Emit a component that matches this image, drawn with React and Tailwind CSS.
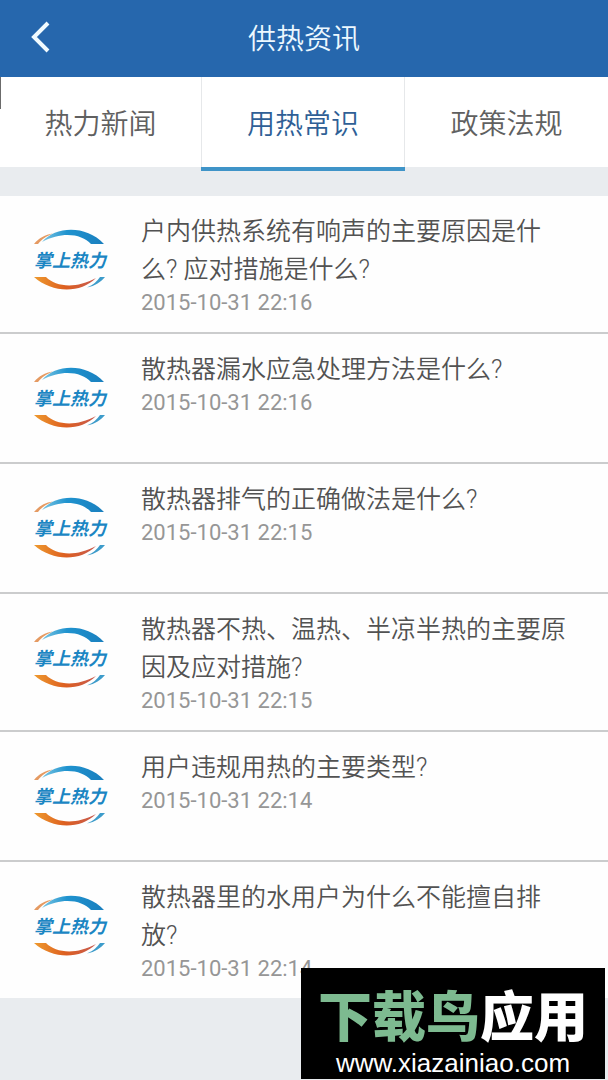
import React from "react";

const tabs = [
  { label: "热力新闻", active: false },
  { label: "用热常识", active: true },
  { label: "政策法规", active: false },
];

const articles = [
  { title: "户内供热系统有响声的主要原因是什么? 应对措施是什么?", time: "2015-10-31 22:16" },
  { title: "散热器漏水应急处理方法是什么?", time: "2015-10-31 22:16" },
  { title: "散热器排气的正确做法是什么?", time: "2015-10-31 22:15" },
  { title: "散热器不热、温热、半凉半热的主要原因及应对措施?", time: "2015-10-31 22:15" },
  { title: "用户违规用热的主要类型?", time: "2015-10-31 22:14" },
  { title: "散热器里的水用户为什么不能擅自排放?", time: "2015-10-31 22:14" },
];

function Logo({ id }) {
  return (
    <svg viewBox="0 0 80 80" className="size-20 shrink-0" role="img" aria-label="掌上热力">
      <defs>
        <linearGradient id={`top-${id}`} x1="0" x2="1">
          <stop offset="0" stopColor="#7cc6e2" />
          <stop offset="0.4" stopColor="#1f93cf" />
          <stop offset="1" stopColor="#1a7fbe" />
        </linearGradient>
        <linearGradient id={`bottom-${id}`} x1="0" x2="1">
          <stop offset="0" stopColor="#ee9a2e" />
          <stop offset="0.5" stopColor="#dd5f20" />
          <stop offset="1" stopColor="#c65a50" />
        </linearGradient>
      </defs>
      <path d="M4 24 C9 18 15 14.500 23 13.500 C16 16.500 12 19 8 24 Z" fill="#e59a62" />
      <path d="M12 22 C26 6 56 5 74 24 L61 24 C52 14 32 11 12 22 Z" fill={`url(#top-${id})`} />
      <path d="M4 57 L16 57 C26 67 46 69 66 58 C50 74 22 73 4 57 Z" fill={`url(#bottom-${id})`} />
      <path d="M75 57 C71 62 65 66 57 67.500 C64 64.500 67 61 70 57 Z" fill="#3d9ccb" />
      <text
        x="4"
        y="47"
        fontSize="18"
        className="fill-[#1b86c3] font-['Noto_Sans_CJK_SC',sans-serif] font-bold italic"
      >
        掌上热力
      </text>
    </svg>
  );
}

function Header() {
  return (
    <header className="relative flex h-[77px] items-center justify-center bg-[#2667ad]">
      <button
        type="button"
        aria-label="返回"
        className="absolute inset-y-0 left-0 flex w-20 items-center justify-center pb-1"
      >
        <svg viewBox="0 0 20 32" className="h-8 w-5" fill="none" stroke="#f1fbff" strokeWidth="4">
          <path d="M18 2 L4 16 L18 30" />
        </svg>
      </button>
      <h1 className="pt-0.5 text-[28px] leading-9 text-[#ecf8ff]">供热资讯</h1>
    </header>
  );
}

function Tabs() {
  return (
    <nav className="relative grid h-[90px] grid-cols-[201fr_204fr_203fr] bg-white">
      <span className="absolute top-0 left-0 h-8 w-px bg-[#6b6b6b]" />
      {tabs.map((tab) => (
        <a
          key={tab.label}
          href="#"
          aria-current={tab.active ? "page" : undefined}
          className={
            tab.active
              ? "relative flex items-center justify-center border-x border-[#e6e8ea] pt-1.5 text-[28px] leading-9 text-[#2f5f96]"
              : "flex items-center justify-center pt-1.5 text-[28px] leading-9 text-[#606060]"
          }
        >
          {tab.label}
          {tab.active && <span className="absolute -inset-x-px top-full h-1 bg-[#3f94c8]" />}
        </a>
      ))}
    </nav>
  );
}

function Article({ article, id }) {
  return (
    <li className="border-b-2 border-[#cbcccd] last:border-b-0">
      <a href="#" className="flex min-h-32 gap-[31px] pt-[17px] pr-9 pb-4 pl-[30px]">
        <div className="pt-[7px]">
          <Logo id={id} />
        </div>
        <div className="min-w-0 flex-1">
          <h2 className="text-[25px] leading-[38px] text-[#525252]">{article.title}</h2>
          <time className="block text-[22px] leading-[27px] font-normal text-[#969696]">
            {article.time}
          </time>
        </div>
      </a>
    </li>
  );
}

function Watermark() {
  return (
    <div className="absolute right-[3px] bottom-px flex w-[304px] flex-col items-center bg-black pt-5">
      <p className="font-['Noto_Sans_CJK_SC',sans-serif] text-[54px] leading-[52px] font-black whitespace-nowrap text-white">
        <span className="text-[#7dba90]">下载鸟</span>应用
      </p>
      <p className="pt-2 font-['Liberation_Sans',sans-serif] text-[26px] leading-[31px] text-white">
        www.xiazainiao.com
      </p>
    </div>
  );
}

export default function App() {
  return (
    <div className="relative min-h-screen bg-[#e9ecef] font-[Roboto,'Noto_Sans_CJK_SC',sans-serif] font-[350]">
      <Header />
      <Tabs />
      <main className="pt-[29px]">
        <ul className="bg-[#fefefe]">
          {articles.map((article, i) => (
            <Article key={article.title} article={article} id={i} />
          ))}
        </ul>
      </main>
      <Watermark />
    </div>
  );
}
